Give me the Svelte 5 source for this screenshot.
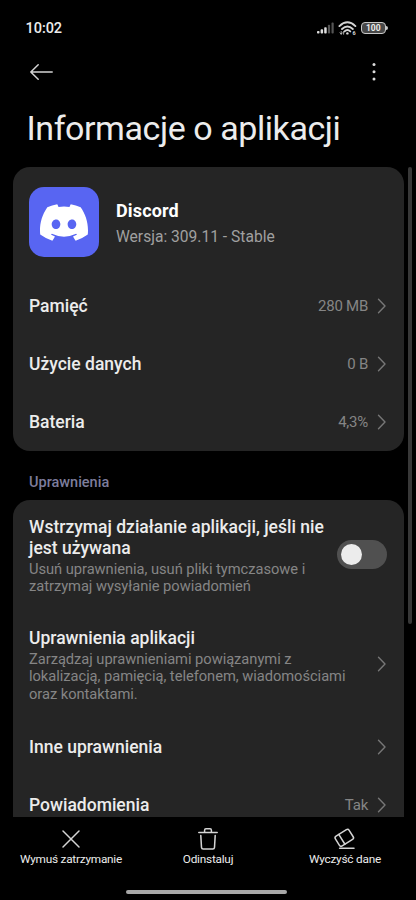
<script>
  const usage = [
    { label: "Pamięć", value: "280 MB" },
    { label: "Użycie danych", value: "0 B" },
    { label: "Bateria", value: "4,3%" },
  ];
  let paused = false;
</script>

{#snippet chevron()}
  <svg class="chevron" width="10" height="16" viewBox="0 0 10 16">
    <path d="M1.5 1.2 L8 8 L1.5 14.8" />
  </svg>
{/snippet}

<div class="phone">
  <div class="status">
    <span class="time">10:02</span>
    <svg class="signal" width="18" height="12" viewBox="0 0 18 12">
      <rect x="0" y="9" width="2.5" height="2.6" rx="0.8" />
      <rect x="3.6" y="7.3" width="2.5" height="4.3" rx="0.8" />
      <rect x="7.2" y="5.2" width="2.5" height="6.4" rx="0.8" />
      <rect class="dim" x="10.9" y="2.8" width="2.2" height="8.8" rx="0.8" />
      <rect class="dim" x="14.5" y="0.6" width="2.2" height="11" rx="0.8" />
    </svg>
    <svg class="wifi" width="20" height="15" viewBox="0 0 20 15">
      <path d="M1.4 5.1 Q9.4 -2.4 17.4 5.1" />
      <path d="M4 8 Q9.4 2.8 14.8 8" />
      <path d="M6.5 10.4 Q9.4 7.6 12.3 10.4" />
      <circle cx="9.4" cy="12.4" r="1.2" />
      <path class="tiny" d="M3.2 10.5 V13.2 M2 11.8 L3.2 13.2 L4.4 11.8 M5.6 13.2 V10.6" />
      <text x="14.4" y="14">6</text>
    </svg>
    <div class="battery"><span>100</span></div>
  </div>

  <div class="toolbar">
    <svg width="24" height="18" viewBox="0 0 24 18">
      <path d="M23.2 9 H1.8 M9.2 1.8 L1.8 9 L9.2 16.2" />
    </svg>
    <svg class="dots" width="4" height="20" viewBox="0 0 4 20">
      <circle cx="2" cy="2.4" r="1.5" />
      <circle cx="2" cy="9.7" r="1.5" />
      <circle cx="2" cy="17" r="1.5" />
    </svg>
  </div>

  <h1>Informacje o aplikacji</h1>

  <main>
    <section class="card">
      <div class="app">
        <div class="logo">
          <svg width="48" height="37" viewBox="0 0 127.14 96.36">
            <path
              d="M107.7 8.07A105.15 105.15 0 0 0 81.47 0a72.06 72.06 0 0 0-3.36 6.83 97.68 97.68 0 0 0-29.11 0A72.37 72.37 0 0 0 45.64 0a105.89 105.89 0 0 0-26.25 8.09C2.79 32.65-1.71 56.6.54 80.21a105.73 105.73 0 0 0 32.17 16.15 77.7 77.7 0 0 0 6.89-11.11 68.42 68.42 0 0 1-10.85-5.18c.91-.66 1.8-1.34 2.66-2a75.57 75.57 0 0 0 64.32 0c.87.71 1.76 1.39 2.66 2a68.68 68.68 0 0 1-10.87 5.19 77 77 0 0 0 6.89 11.1 105.25 105.25 0 0 0 32.19-16.14c2.64-27.38-4.51-51.11-18.9-72.15ZM42.45 65.69C36.18 65.69 31 60 31 53s5-12.74 11.43-12.74S54 46 53.89 53s-5.05 12.69-11.44 12.69Zm42.24 0C78.41 65.69 73.25 60 73.25 53s5-12.74 11.44-12.74S96.23 46 96.12 53s-5.04 12.69-11.43 12.69Z"
            />
          </svg>
        </div>
        <div class="about">
          <div class="name">Discord</div>
          <div class="version">Wersja: 309.11 - Stable</div>
        </div>
      </div>
      {#each usage as { label, value }}
        <div class="row">
          <span class="label">{label}</span>
          <span class="value">{value}</span>
          {@render chevron()}
        </div>
      {/each}
    </section>

    <h2>Uprawnienia</h2>

    <section class="card">
      <div class="row pause">
        <div class="text">
          <div class="label">Wstrzymaj działanie aplikacji, jeśli nie<br />jest używana</div>
          <p>Usuń uprawnienia, usuń pliki tymczasowe i<br />zatrzymaj wysyłanie powiadomień</p>
        </div>
        <button
          class="switch"
          class:on={paused}
          aria-label="Wstrzymaj działanie aplikacji"
          on:click={() => (paused = !paused)}
        ></button>
      </div>
      <div class="row perms">
        <div class="text">
          <div class="label">Uprawnienia aplikacji</div>
          <p>
            Zarządzaj uprawnieniami powiązanymi z<br />lokalizacją, pamięcią, telefonem, wiadomościami<br />oraz
            kontaktami.
          </p>
        </div>
        {@render chevron()}
      </div>
      <div class="row">
        <span class="label">Inne uprawnienia</span>
        {@render chevron()}
      </div>
      <div class="row">
        <span class="label">Powiadomienia</span>
        <span class="value">Tak</span>
        {@render chevron()}
      </div>
    </section>
    <div class="scrollbar"></div>
  </main>

  <footer>
    <div class="action">
      <svg width="24" height="24" viewBox="0 0 24 24">
        <path d="M4 4 L20 20 M20 4 L4 20" />
      </svg>
      <span>Wymuś zatrzymanie</span>
    </div>
    <div class="action">
      <svg width="24" height="24" viewBox="0 0 24 24">
        <path d="M2.8 5.6 H21.2 M8.6 5.2 V3.2 Q8.6 1.8 10 1.8 H14 Q15.4 1.8 15.4 3.2 V5.2" />
        <path d="M4.8 8.4 L5.5 20.4 Q5.6 22 7.2 22 H16.8 Q18.4 22 18.5 20.4 L19.2 8.4" />
      </svg>
      <span>Odinstaluj</span>
    </div>
    <div class="action">
      <svg width="24" height="24" viewBox="0 0 24 24">
        <g transform="rotate(-32 11.3 10.8)">
          <rect x="3.2" y="5" width="16.2" height="11.6" rx="2" />
          <path d="M8.4 5 V16.6" />
        </g>
        <path d="M6.6 21.2 H21" />
      </svg>
      <span>Wyczyść dane</span>
    </div>
    <div class="home"></div>
  </footer>
</div>

<style>
  :global(body) {
    background: #000;
  }

  .phone {
    display: flex;
    flex-direction: column;
    width: 416px;
    height: 900px;
    overflow: hidden;
    background: #000;
    color: #ececec;
    font-family: Roboto, "Liberation Sans", sans-serif;
  }

  svg {
    flex: none;
    fill: none;
    stroke: #d4d4d4;
    stroke-width: 1.5;
    stroke-linecap: round;
    stroke-linejoin: round;
  }

  .status {
    display: flex;
    align-items: center;
    height: 56px;
    padding: 0 30.5px 0 25.5px;
    box-sizing: border-box;
  }

  .time {
    flex: 1;
    font-size: 14.5px;
    font-weight: 500;
    letter-spacing: -0.05px;
  }

  .signal {
    fill: #ddd;
    stroke: none;
  }

  .signal .dim {
    fill: #555;
  }

  .wifi {
    margin: 0 3.5px 0 3px;
    stroke-width: 1.9;
  }

  .wifi circle,
  .wifi text {
    fill: #ddd;
    stroke: none;
  }

  .wifi text {
    font-size: 5.5px;
    font-weight: 700;
  }

  .wifi .tiny {
    stroke-width: 0.8;
  }

  .battery {
    position: relative;
    width: 24.5px;
    height: 12px;
    box-sizing: border-box;
    border: 1.4px solid #c8c8c8;
    border-radius: 4px;
    background: #484848;
    text-align: center;
    font-size: 8.5px;
    line-height: 10px;
    font-weight: 700;
  }

  .battery::after {
    content: "";
    position: absolute;
    right: -3px;
    top: 3px;
    width: 2px;
    height: 4px;
    border-radius: 0 2px 2px 0;
    background: #c8c8c8;
  }

  .toolbar {
    display: flex;
    justify-content: space-between;
    align-items: center;
    height: 31px;
    padding: 0 40px 0 29px;
  }

  .dots {
    fill: #dcdcdc;
    stroke: none;
  }

  h1 {
    height: 80px;
    margin: 0;
    padding-left: 26.5px;
    font-size: 34px;
    line-height: 82px;
    font-weight: 400;
    letter-spacing: -0.43px;
    white-space: nowrap;
  }

  main {
    position: relative;
    height: 650px;
    padding: 0 12.5px;
    overflow: hidden;
  }

  .card {
    padding: 0 16.5px;
    border-radius: 17px;
    background: #252525;
  }

  .app {
    display: flex;
    align-items: center;
    gap: 17px;
    height: 110px;
  }

  .logo {
    display: flex;
    align-items: center;
    justify-content: center;
    width: 70px;
    height: 70px;
    border-radius: 15px;
    background: #5865f2;
  }

  .logo svg {
    fill: #fff;
    stroke: none;
  }

  .about {
    padding-top: 3px;
  }

  .name {
    font-size: 18px;
    line-height: 26px;
    font-weight: 700;
    letter-spacing: 0.15px;
    color: #fff;
  }

  .version {
    font-size: 15.6px;
    line-height: 26px;
    color: #a0a0a0;
  }

  .row {
    display: flex;
    align-items: center;
    height: 58px;
    white-space: nowrap;
  }

  .label {
    flex: 1;
    font-size: 17.5px;
    line-height: 20.5px;
    font-weight: 500;
  }

  .value {
    margin-right: 9px;
    font-size: 15px;
    letter-spacing: -0.25px;
    color: #858585;
  }

  .chevron {
    stroke: #777;
    stroke-width: 1.4;
  }

  h2 {
    margin: 0;
    padding-left: 16.5px;
    font-size: 14.5px;
    line-height: 64px;
    height: 49px;
    font-weight: 500;
    color: #7d7d9c;
  }

  .text {
    flex: 1;
    padding-top: 2px;
  }

  .pause {
    height: 111px;
  }

  .perms {
    height: 107px;
  }

  .perms .chevron {
    margin-bottom: 2px;
  }

  p {
    margin: 2.5px 0 0;
    font-size: 14.7px;
    line-height: 17.3px;
    letter-spacing: -0.04px;
    color: #858585;
  }

  .switch {
    position: relative;
    flex: none;
    width: 50px;
    height: 29px;
    margin-bottom: 2px;
    padding: 0;
    border: none;
    border-radius: 15px;
    background: #505050;
  }

  .switch::after {
    content: "";
    position: absolute;
    left: 4px;
    top: 4px;
    width: 21px;
    height: 21px;
    border-radius: 50%;
    background: #ececec;
  }

  .switch.on {
    background: #3482ff;
  }

  .switch.on::after {
    left: 25px;
  }

  .scrollbar {
    position: absolute;
    right: 4px;
    top: 0;
    width: 4px;
    height: 457px;
    border-radius: 2px;
    background: #383838;
  }

  footer {
    position: relative;
    display: flex;
    justify-content: space-between;
    height: 83px;
    padding: 0 2.5px;
  }

  .action {
    display: flex;
    flex-direction: column;
    align-items: center;
    width: 137px;
    padding-top: 10px;
    font-size: 11.8px;
    line-height: 17px;
    letter-spacing: -0.22px;
  }

  .home {
    position: absolute;
    left: 126px;
    bottom: 6px;
    width: 161px;
    height: 4px;
    border-radius: 2px;
    background: #a8a8a8;
  }
</style>
